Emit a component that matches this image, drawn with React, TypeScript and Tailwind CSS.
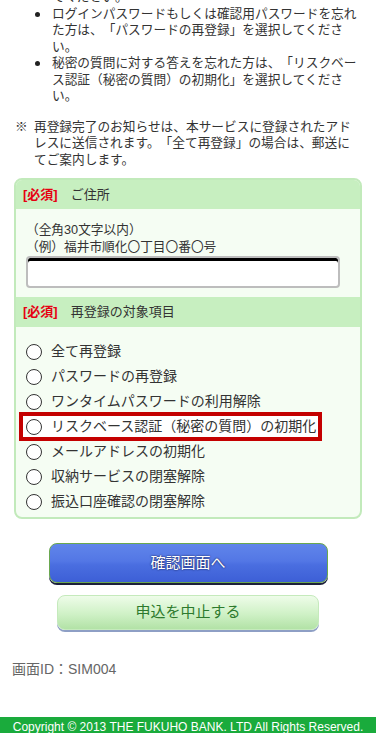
const items = [
  "全て再登録",
  "パスワードの再登録",
  "ワンタイムパスワードの利用解除",
  "リスクベース認証（秘密の質問）の初期化",
  "メールアドレスの初期化",
  "収納サービスの閉塞解除",
  "振込口座確認の閉塞解除",
];

function Bullet({ children, dot = true }: { children: React.ReactNode; dot?: boolean }) {
  return (
    <li className="flex">
      <span className="flex w-[52px] shrink-0 justify-end pr-[12px]">
        {dot && <span className="mt-[6px] h-[5px] w-[5px] rounded-full bg-[#222]" />}
      </span>
      <span>{children}</span>
    </li>
  );
}

function Radio({ label, marked }: { label: string; marked?: boolean }) {
  if (marked) {
    return (
      <div className="-my-[2px] -ml-[7px] flex h-[29px] w-fit items-center border-4 border-[#c40000] bg-white pl-[3px] pr-[2px]">
        <span className="h-[16px] w-[16px] shrink-0 rounded-full border-[1.5px] border-[#333] bg-white" />
        <span className="ml-[9px]">{label}</span>
      </div>
    );
  }
  return (
    <div className="flex h-[25px] items-center">
      <span className="h-[16px] w-[16px] shrink-0 rounded-full border-[1.5px] border-[#333] bg-white" />
      <span className="ml-[9px]">{label}</span>
    </div>
  );
}

export default function App() {
  return (
    <div className="h-[733px] overflow-hidden bg-white font-['Liberation_Sans','Noto_Sans_CJK_JP',sans-serif] text-[#333] [text-spacing-trim:space-all]">
      <div className="-mt-[11px] pr-[14px] text-[12.7px] leading-[16.5px]">
        <ul>
          <Bullet dot={false}>てください。</Bullet>
          <Bullet>ログインパスワードもしくは確認用パスワードを忘れた方は、「パスワードの再登録」を選択してください。</Bullet>
          <Bullet>秘密の質問に対する答えを忘れた方は、「リスクベース認証（秘密の質問）の初期化」を選択してください。</Bullet>
        </ul>
        <p className="mt-[14px] flex">
          <span className="w-[34px] shrink-0 pl-[15px]">※</span>
          <span>再登録完了のお知らせは、本サービスに登録されたアドレスに送信されます。「全て再登録」の場合は、郵送にてご案内します。</span>
        </p>
      </div>

      <div className="mx-[14px] mt-[10px] overflow-hidden rounded-[8px] border-2 border-[#c2eabb] bg-[#f5fdf3]">
        <div className="flex h-[29px] items-center bg-[#c7efc0] pl-[7px] text-[13px]">
          <span className="mr-[13px] font-bold text-[#e60012]">[必須]</span>
          <span>ご住所</span>
        </div>
        <div className="pb-[9px] pl-[10px] pt-[13px] text-[12.7px] leading-[17px]">
          <p>（全角30文字以内）</p>
          <p>（例）福井市順化〇丁目〇番〇号</p>
          <input
            type="text"
            className="block h-[32px] w-[314px] rounded-[4px] border-2 border-[#bdbdbd] bg-white shadow-[inset_0_3px_0_#000] outline-none"
          />
        </div>
        <div className="flex h-[30px] items-center bg-[#c7efc0] pl-[7px] text-[13px]">
          <span className="mr-[13px] font-bold text-[#e60012]">[必須]</span>
          <span>再登録の対象項目</span>
        </div>
        <div className="pb-[3px] pl-[10px] pt-[12px] text-[14px]">
          {items.map((it, i) => (
            <Radio key={it} label={it} marked={i === 3} />
          ))}
        </div>
      </div>

      <button className="mx-auto mt-[24px] flex h-[40px] w-[279px] items-center justify-center rounded-[8px] border border-[#6aa84f] bg-[linear-gradient(to_bottom,#6085ea_0%,#5377e5_45%,#4a6ee0_55%,#3d5fd6_100%)] text-[15px] text-white shadow-[0_2px_0_#1b1f3b] [text-shadow:0_0_2px_#0a0a30]">
        確認画面へ
      </button>
      <button className="mx-auto mt-[12px] flex h-[35px] w-[262px] items-center justify-center rounded-[8px] border border-[#c5eabc] bg-[linear-gradient(to_bottom,#eefce9_0%,#cff1c6_55%,#b2e2a6_100%)] text-[15px] text-[#2d7a2d] shadow-[0_2px_0_#8e9fc5]">
        申込を中止する
      </button>

      <p className="mt-[30px] pl-[12px] text-[14px] leading-[18px] text-[#666]">画面ID：SIM004</p>

      <footer className="mt-[39px] h-[20px] bg-[#1aab3c] text-center text-[12px] leading-[20px] text-white">
        Copyright © 2013 THE FUKUHO BANK. LTD All Rights Reserved.
      </footer>
    </div>
  );
}
